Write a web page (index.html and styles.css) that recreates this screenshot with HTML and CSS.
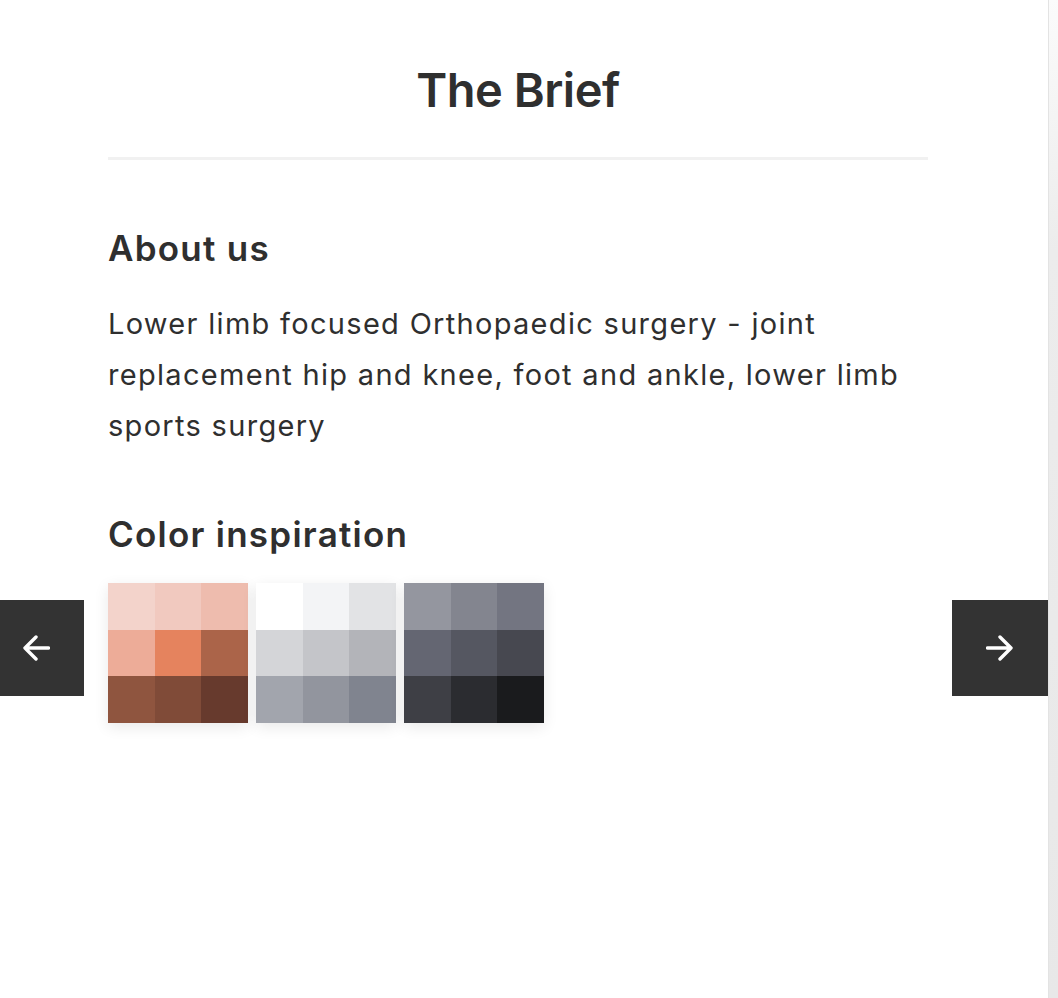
FILE: index.html
```html
<!DOCTYPE html>
<html lang="en">
<head>
<meta charset="utf-8">
<title>The Brief</title>
<link rel="stylesheet" href="styles.css">
</head>
<body>
<div class="page">
  <main class="brief">
    <h1 class="brief-title">The Brief</h1>
    <hr class="brief-rule">
    <section class="brief-section">
      <h2 class="section-title">About us</h2>
      <p class="section-text">Lower limb focused Orthopaedic surgery - joint replacement hip and knee, foot and ankle, lower limb sports surgery</p>
    </section>
    <section class="brief-section colors">
      <h2 class="section-title">Color inspiration</h2>
      <div class="palettes">
        <div class="palette">
          <span class="c" style="background:#f3d3cb"></span><span class="c" style="background:#f1c9bf"></span><span class="c" style="background:#eebcae"></span>
          <span class="c" style="background:#edac98"></span><span class="c" style="background:#e5835e"></span><span class="c" style="background:#ab6449"></span>
          <span class="c" style="background:#8f553f"></span><span class="c" style="background:#804b38"></span><span class="c" style="background:#673a2d"></span>
        </div>
        <div class="palette">
          <span class="c" style="background:#ffffff"></span><span class="c" style="background:#f3f4f6"></span><span class="c" style="background:#e2e3e5"></span>
          <span class="c" style="background:#d4d5d8"></span><span class="c" style="background:#c4c5c9"></span><span class="c" style="background:#b3b4b9"></span>
          <span class="c" style="background:#a2a5ad"></span><span class="c" style="background:#92959e"></span><span class="c" style="background:#80848f"></span>
        </div>
        <div class="palette">
          <span class="c" style="background:#94969f"></span><span class="c" style="background:#83858f"></span><span class="c" style="background:#737581"></span>
          <span class="c" style="background:#646672"></span><span class="c" style="background:#555761"></span><span class="c" style="background:#474850"></span>
          <span class="c" style="background:#3e3f45"></span><span class="c" style="background:#2b2c30"></span><span class="c" style="background:#1a1b1d"></span>
        </div>
      </div>
    </section>
  </main>
  <button class="nav nav-prev" aria-label="Previous">
    <svg width="28" height="28" viewBox="0 0 28 28"><path d="M26.5 14H3M14 3L3 14L14 25" fill="none" stroke="#fff" stroke-width="3.4" stroke-linecap="round" stroke-linejoin="round"/></svg>
  </button>
  <button class="nav nav-next" aria-label="Next">
    <svg width="28" height="28" viewBox="0 0 28 28"><path d="M1.5 14H25M14 3L25 14L14 25" fill="none" stroke="#fff" stroke-width="3.4" stroke-linecap="round" stroke-linejoin="round"/></svg>
  </button>
</div>
<div class="scrolltrack"></div>
</body>
</html>
```

FILE: styles.css
```css
html, body {
  margin: 0;
  padding: 0;
  background: #fff;
}
body {
  font-family: Inter, "Open Sans", "Liberation Sans", sans-serif;
  color: #2f2f2f;
  overflow: hidden;
}
.page {
  position: relative;
  width: 1048px;
  height: 998px;
}
.brief {
  width: 820px;
  margin-left: 108px;
  padding-top: 58px;
}
.brief-title {
  margin: 0;
  text-align: center;
  font-size: 47px;
  font-weight: 600;
  line-height: 64px;
  letter-spacing: -0.5px;
}
.brief-rule {
  border: 0;
  height: 3px;
  background: #f1f1f1;
  margin: 35px 0 0;
}
.brief-section {
  margin-top: 64px;
}
.section-title {
  margin: 0;
  font-size: 35px;
  font-weight: 600;
  line-height: 48px;
  letter-spacing: 1.25px;
}
.section-text {
  margin: 26px 0 0;
  font-size: 29px;
  line-height: 51px;
  font-weight: 400;
  letter-spacing: 1.3px;
}
.colors {
  margin-top: 59px;
}
.palettes {
  display: flex;
  gap: 8px;
  margin-top: 25px;
}
.palette {
  width: 140px;
  height: 140px;
  display: grid;
  grid-template-columns: repeat(3, 1fr);
  grid-template-rows: repeat(3, 1fr);
  box-shadow: 0 4px 14px rgba(0, 0, 0, 0.09);
}
.c {
  display: block;
}
.nav {
  position: absolute;
  top: 600px;
  width: 96px;
  height: 96px;
  border: 0;
  padding: 0;
  background: #333;
  display: flex;
  align-items: center;
  justify-content: center;
  cursor: pointer;
}
.nav-prev {
  left: -12px;
}
.nav-next {
  left: 952px;
}
.scrolltrack {
  position: fixed;
  top: 0;
  right: 0;
  width: 10px;
  height: 998px;
  background: linear-gradient(to bottom, #fbfbfb 0%, #ececec 25%, #e8e8e8 100%);
  border-left: 1px solid #e3e3e3;
  box-sizing: border-box;
}
```
